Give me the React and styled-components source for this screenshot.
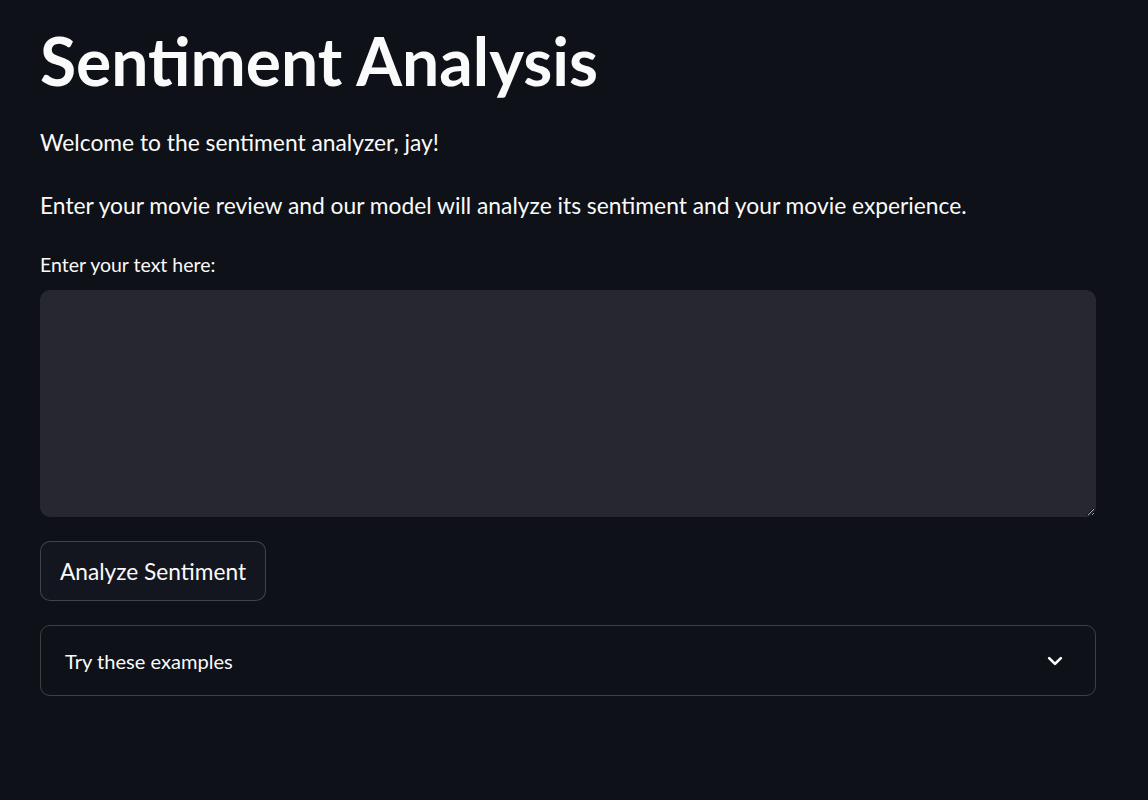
import styled, { createGlobalStyle } from "styled-components";

const Global = createGlobalStyle`
  html, body {
    margin: 0;
    padding: 0;
    background: #0e1117;
  }
  body {
    font-family: "Source Sans Pro", Lato, "Liberation Sans", sans-serif;
    color: #fafafa;
  }
`;

const Page = styled.div`
  min-height: 800px;
  box-sizing: border-box;
  padding: 22px 52px 0 40px;
  display: flex;
  flex-direction: column;
`;

const Title = styled.h1`
  margin: 0;
  font-size: 66px;
  font-weight: 700;
  line-height: 78px;
`;

const Para = styled.p`
  margin: 0;
  font-size: 22.8px;
  line-height: 32px;
  margin-top: ${(p) => p.$top || 0}px;
`;

const Label = styled.label`
  margin-top: 32px;
  font-size: 19.5px;
  line-height: 24px;
`;

const TextArea = styled.textarea`
  margin-top: 13px;
  height: 227px;
  box-sizing: border-box;
  width: 100%;
  background: #262730;
  border: 1px solid #262730;
  border-radius: 10px;
  color: #fafafa;
  color-scheme: dark;
  font: inherit;
  font-size: 20px;
  padding: 12px 16px;
  outline: none;
  resize: vertical;
`;

const Button = styled.button`
  align-self: flex-start;
  margin-top: 24px;
  height: 60px;
  padding: 0 19px;
  background: #13161e;
  border: 1px solid rgba(250, 250, 250, 0.2);
  border-radius: 10px;
  color: #fafafa;
  font-family: inherit;
  font-size: 22.7px;
`;

const Expander = styled.div`
  margin-top: 24px;
  height: 71px;
  box-sizing: border-box;
  border: 1px solid rgba(250, 250, 250, 0.2);
  border-radius: 10px;
  display: flex;
  align-items: center;
  justify-content: space-between;
  padding: 0 30px 0 24px;
  font-size: 20.1px;
`;

function Chevron() {
  return (
    <svg width="20" height="20" viewBox="0 0 24 24" fill="none">
      <path d="M5 8.5l7 7 7-7" stroke="#fafafa" strokeWidth="3.2" strokeLinecap="round" strokeLinejoin="round" />
    </svg>
  );
}

export default function App() {
  return (
    <>
      <Global />
      <Page>
        <Title>Sentiment Analysis</Title>
        <Para $top={26}>Welcome to the sentiment analyzer, jay!</Para>
        <Para $top={31}>
          Enter your movie review and our model will analyze its sentiment and your movie experience.
        </Para>
        <Label>Enter your text here:</Label>
        <TextArea />
        <Button>Analyze Sentiment</Button>
        <Expander>
          <span>Try these examples</span>
          <Chevron />
        </Expander>
      </Page>
    </>
  );
}
